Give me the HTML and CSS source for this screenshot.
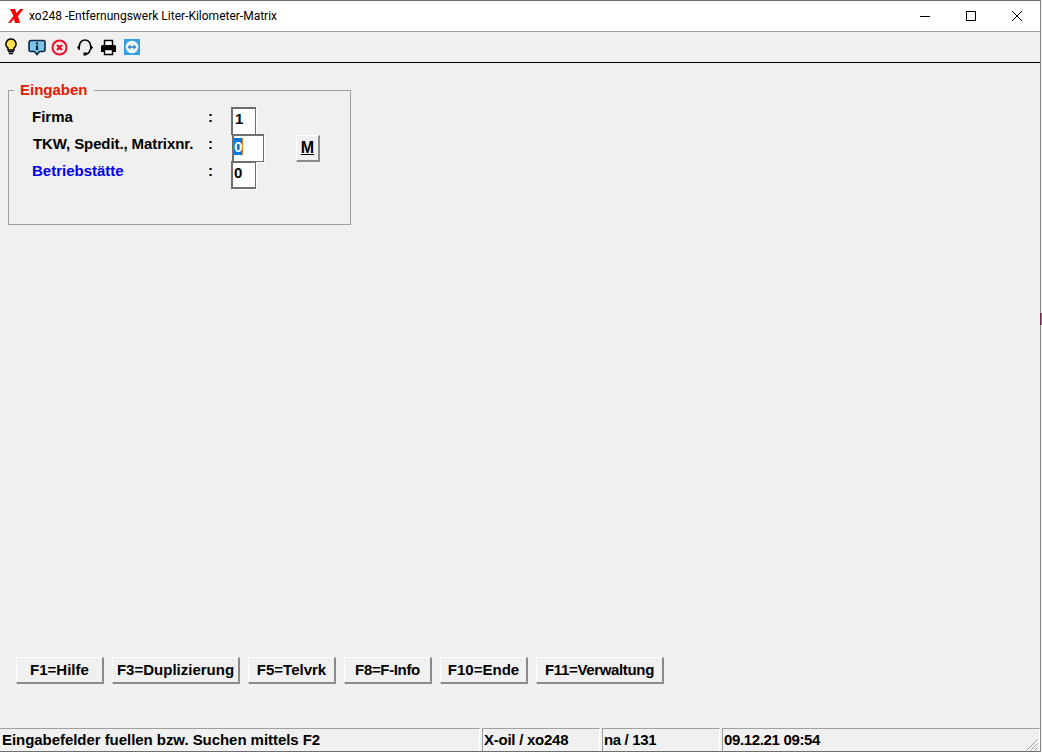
FILE: index.html
```html
<!DOCTYPE html>
<html lang="de">
<head>
<meta charset="utf-8">
<title>xo248 -Entfernungswerk Liter-Kilometer-Matrix</title>
<link rel="stylesheet" href="styles.css">
</head>
<body>
<div class="window">
  <header class="titlebar">
    <svg class="app-logo" width="16" height="16" viewBox="0 0 16 16"><path d="M2 1h5l1.500 4L12 1h3.500L10 8l2 7H7L6 11l-3.500 4H0l5.500-7Z" fill="#f00"/></svg>
    <span class="title">xo248 -Entfernungswerk Liter-Kilometer-Matrix</span>
    <div class="winctl">
      <svg width="46" height="30" viewBox="0 0 46 30"><path d="M18 15.500h10" stroke="#000" fill="none"/></svg>
      <svg width="46" height="30" viewBox="0 0 46 30"><rect x="18.500" y="10.500" width="9" height="9" stroke="#000" fill="none"/></svg>
      <svg width="46" height="30" viewBox="0 0 46 30"><path d="M18 10l10 10M28 10l-10 10" stroke="#000" fill="none"/></svg>
    </div>
  </header>
  <nav class="toolbar">
    <svg class="tool tool-bulb" width="14" height="17" viewBox="0 0 14 17"><path d="M7 1a5 5 0 0 0-3 9v2h6v-2a5 5 0 0 0-3-9Z" fill="#ffe14d" stroke="#000" stroke-width="1.500"/><path d="M4 13.500h6M5 15.500h4" stroke="#000" stroke-width="1.300"/></svg>
    <svg class="tool tool-info" width="18" height="17" viewBox="0 0 18 17"><path d="M3 1.500h12a2 2 0 0 1 2 2v7a2 2 0 0 1-2 2h-3.500L9 15.500 6.500 12.500H3a2 2 0 0 1-2-2v-7a2 2 0 0 1 2-2Z" fill="#7cc4e8" stroke="#0a2540" stroke-width="1.600"/><path d="M9 3.500v2M9 6.500v4.500" stroke="#0a2540" stroke-width="2.200"/></svg>
    <svg class="tool tool-stop" width="17" height="17" viewBox="0 0 17 17"><circle cx="8.500" cy="8.500" r="7" fill="#fdeaea" stroke="#e8112d" stroke-width="2"/><path d="M6 6l5 5M11 6l-5 5" stroke="#e8112d" stroke-width="2.200"/></svg>
    <svg class="tool tool-head" width="16" height="17" viewBox="0 0 16 17"><path d="M2.500 7V6.500a5.500 5.500 0 0 1 11 0V7M13 10.500c-.3 3-2 4.500-5 4.500" fill="none" stroke="#000" stroke-width="1.600"/><path d="M2.500 6 L0.500 8.500 L2.500 11ZM13.500 6 L15.500 8.500 L13.500 11Z" fill="#000" stroke="#000"/><rect x="6.500" y="13.500" width="3" height="3" fill="#000"/></svg>
    <svg class="tool tool-print" width="17" height="17" viewBox="0 0 17 17"><path d="M4.500 6V1.500h8V6" fill="#fff" stroke="#000" stroke-width="1.500"/><path d="M2.500 6h12A1.500 1.500 0 0 1 16 7.500V13h-3v-2.500H4V13H1V7.500A1.500 1.500 0 0 1 2.500 6Z" fill="#000"/><path d="M4.500 10.500h8v5h-8Z" fill="#fff" stroke="#000" stroke-width="1.400"/></svg>
    <svg class="tool tool-tv" width="16" height="16" viewBox="0 0 16 16"><rect width="16" height="16" fill="#35a0e0"/><circle cx="8" cy="8" r="6.300" fill="#f2f8fc"/><path d="M3.500 8L6.500 5.500v1.800h3V5.500L12.500 8 9.500 10.500V8.700h-3v1.800Z" fill="#2f86c6"/></svg>
  </nav>
  <main class="content">
    <fieldset class="group">
      <legend class="group-title">Eingaben</legend>
      <div class="form">
        <label class="lbl">Firma</label><span class="colon">:</span><span class="field field-s">1</span><span></span>
        <label class="lbl lbl-shift">TKW, Spedit., Matrixnr.</label><span class="colon">:</span><span class="field field-l"><span class="sel">0</span></span><button class="btn btn-m" type="button"><u>M</u></button>
        <label class="lbl lbl-blue">Betriebstätte</label><span class="colon">:</span><span class="field field-s field-last">0</span><span></span>
      </div>
    </fieldset>
    <div class="fkeys">
      <button class="btn fkey" type="button">F1=Hilfe</button>
      <button class="btn fkey fkey-w" type="button">F3=Duplizierung</button>
      <button class="btn fkey" type="button">F5=Telvrk</button>
      <button class="btn fkey fkey-tight" type="button">F8=F-Info</button>
      <button class="btn fkey" type="button">F10=Ende</button>
      <button class="btn fkey fkey-w fkey-tight" type="button">F11=Verwaltung</button>
    </div>
  </main>
  <footer class="status">
    <div class="pane pane-msg">Eingabefelder fuellen bzw. Suchen mittels F2</div>
    <div class="pane pane-mid">X-oil / xo248</div>
    <div class="pane pane-mid pane-tight">na / 131</div>
    <div class="pane pane-date pane-tight">09.12.21 09:54</div>
    <svg class="grip" width="13" height="13" viewBox="0 0 13 13"><path d="M12.500 1.500l-11 11M12.500 5.500l-7 7M12.500 9.500l-3 3" stroke="#a0a0a0" fill="none"/></svg>
  </footer>
</div>
<div class="edge-sliver"></div>
</body>
</html>
```
FILE: styles.css
```css
html, body {
  margin: 0;
  padding: 0;
  background: #f0f0f0;
}
body {
  position: relative;
  width: 1042px;
  height: 752px;
  overflow: hidden;
  font-family: "Liberation Sans", Arial, sans-serif;
  font-size: 15px;
  font-weight: bold;
  color: #000;
}
.window {
  box-sizing: border-box;
  width: 1041px;
  height: 752px;
  display: flex;
  flex-direction: column;
  border-top: 1px solid #6e6e6e;
  border-right: 1px solid #8a8a8a;
  border-bottom: 1px solid #6e6e6e;
  background: #f0f0f0;
}
.edge-sliver {
  position: absolute;
  left: 1040px;
  top: 313px;
  width: 1px;
  height: 12px;
  background: #7a2a3a;
  border-right: 1px solid #4f87a8;
}
.titlebar {
  flex: none;
  height: 30px;
  display: flex;
  align-items: center;
  background: #fff;
  border-bottom: 1px solid #a0a0a0;
  padding-left: 8px;
}
.app-logo {
  flex: none;
}
.title {
  margin-left: 5px;
  font-family: Roboto, "Noto Sans", sans-serif;
  font-weight: normal;
  font-size: 12px;
  color: #000;
  white-space: nowrap;
}
.winctl {
  margin-left: auto;
  display: flex;
}
.winctl svg {
  display: block;
}
.toolbar {
  flex: none;
  box-sizing: border-box;
  height: 31px;
  display: flex;
  align-items: center;
  padding-left: 4px;
  border-bottom: 1px solid #000;
  background: #f0f0f0;
}
.tool {
  flex: none;
  display: block;
}
.tool-bulb { margin-bottom: 2px; }
.tool-info { margin-left: 10px; }
.tool-stop { margin-left: 5px; }
.tool-head { margin-left: 9px; }
.tool-print { margin-left: 7px; }
.tool-tv { margin-left: 7px; }
.content {
  flex: 1;
  min-height: 0;
  display: flex;
  flex-direction: column;
  padding: 19px 0 0 8px;
}
.group {
  box-sizing: border-box;
  width: 343px;
  height: 143px;
  margin: 0;
  padding: 0;
  border: 1px solid #a0a0a0;
}
.group-title {
  margin-left: 5px;
  padding: 0 6px;
  color: #e02000;
  font-size: 15px;
  line-height: 16px;
}
.form {
  display: grid;
  grid-template-columns: 176px 23px 64px auto;
  grid-auto-rows: 27px;
  align-items: start;
  margin: 9px 0 0 23px;
}
.lbl {
  line-height: 16px;
  margin-top: 2px;
  white-space: nowrap;
}
.lbl-shift {
  margin-left: 1px;
  letter-spacing: -0.1px;
}
.lbl-blue {
  color: #0000f0;
}
.colon {
  line-height: 16px;
  margin-top: 2px;
}
.field {
  display: block;
  box-sizing: border-box;
  height: 28px;
  padding: 2px 0 0 2px;
  line-height: 16px;
  background: #fff;
  border-top: 2px solid #6e6e6e;
  border-left: 2px solid #6e6e6e;
  border-right: 1px solid #6e6e6e;
  border-bottom: 1px solid #6e6e6e;
  box-shadow: 1px 1px 0 #fff;
}
.field-s {
  width: 25px;
}
.field-l {
  width: 32px;
  margin-left: 1px;
  padding-left: 0;
}
.field-last {
  border-bottom-width: 2px;
  padding-left: 1px;
}
.sel {
  display: inline-block;
  line-height: 17px;
  background: #0078d7;
  color: #fff;
  border-right: 1px solid #e8801a;
}
.btn {
  box-sizing: border-box;
  margin: 0;
  padding: 0 0 1px;
  background: #f0f0f0;
  color: #000;
  font: inherit;
  border-top: 1px solid #fff;
  border-left: 1px solid #fff;
  border-right: 2px solid #8a8a8a;
  border-bottom: 2px solid #8a8a8a;
}
.btn-m {
  width: 24px;
  height: 27px;
  margin-top: 1px;
  margin-left: 1px;
  font-size: 16px;
}
.fkeys {
  margin-top: auto;
  margin-bottom: 44px;
  padding-left: 8px;
  display: flex;
  gap: 8px;
}
.fkey {
  width: 88px;
  height: 27px;
  white-space: nowrap;
}
.fkey-w {
  width: 128px;
}
.fkey-tight {
  letter-spacing: -0.35px;
}
.status {
  flex: none;
  position: relative;
  height: 23px;
  display: flex;
  gap: 2px;
}
.pane {
  box-sizing: border-box;
  height: 23px;
  padding-left: 1px;
  line-height: 21px;
  border-top: 1px solid #a0a0a0;
  border-left: 1px solid #a0a0a0;
  border-right: 1px solid #fff;
  white-space: nowrap;
  letter-spacing: -0.25px;
}
.pane-msg {
  width: 480px;
  border-left: 0;
  padding-left: 2px;
  letter-spacing: -0.05px;
}
.pane-mid {
  width: 118px;
}
.pane-date {
  width: 318px;
}
.pane-tight {
  letter-spacing: -0.35px;
}
.grip {
  position: absolute;
  right: 2px;
  bottom: 0;
}
```
